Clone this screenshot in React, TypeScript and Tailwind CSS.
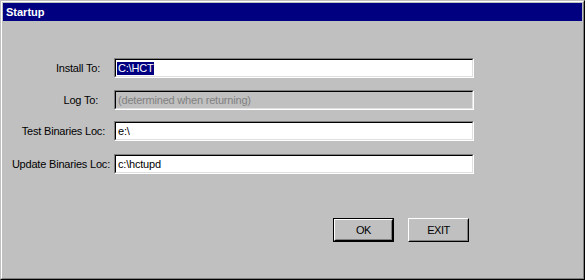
import React from "react";

function Field({
  label,
  pr,
  children,
  disabled,
  mt,
}: {
  label: string;
  pr: string;
  children: React.ReactNode;
  disabled?: boolean;
  mt: string;
}) {
  return (
    <div className={`flex items-center h-[20px] ${mt}`}>
      <div className={`w-[111px] text-right text-[11px] text-black leading-none tracking-[-0.2px] ${pr}`}>{label}</div>
      <div className="w-[360px] h-[20px] border border-t-[#808080] border-l-[#808080] border-r-white border-b-white">
        <div
          className={`h-full border border-t-black border-l-black border-r-[#dfdfdf] border-b-[#dfdfdf] flex items-center pl-[1px] text-[11px] leading-none tracking-[-0.2px] ${
            disabled ? "bg-[#c0c0c0] text-[#808080]" : "bg-white text-black"
          }`}
        >
          {children}
        </div>
      </div>
    </div>
  );
}

export default function App() {
  return (
    <div className="w-[585px] h-[280px] font-['Liberation_Sans',Arial,sans-serif] border border-t-[#c0c0c0] border-l-[#c0c0c0] border-r-black border-b-black bg-[#c0c0c0]">
      <div className="h-full border border-t-white border-l-white border-r-[#808080] border-b-[#808080] p-px flex flex-col">
        <div className="h-[18px] bg-[#000080] text-white font-bold text-[11px] pl-[3px] flex items-center leading-none">
          Startup
        </div>
        <div className="flex flex-col">
          <Field label="Install To:" pr="pr-[14px]" mt="mt-[37px]">
            <span className="bg-[#000080] text-white h-[13px] flex items-center px-px">C:\HCT</span>
          </Field>
          <Field label="Log To:" pr="pr-[16px]" mt="mt-[12px]" disabled>
            <span className="px-px">(determined when returning)</span>
          </Field>
          <Field label="Test Binaries Loc:" pr="pr-[9px]" mt="mt-[11px]">
            <span className="px-px">e:\</span>
          </Field>
          <Field label="Update Binaries Loc:" pr="pr-[4px]" mt="mt-[13px]">
            <span className="px-px">c:\hctupd</span>
          </Field>
          <div className="flex justify-end gap-[14px] pr-[113px] mt-[44px]">
            <button className="w-[61px] h-[24px] border border-black p-0 bg-[#c0c0c0]">
              <div className="h-full border border-t-white border-l-white border-r-black border-b-black">
                <div className="h-full border border-t-[#c0c0c0] border-l-[#c0c0c0] border-r-[#808080] border-b-[#808080] flex items-center justify-center text-[11px] text-black leading-none tracking-[-0.5px]">
                  OK
                </div>
              </div>
            </button>
            <button className="w-[61px] h-[24px] border border-t-white border-l-white border-r-black border-b-black p-0 bg-[#c0c0c0]">
              <div className="h-full border border-t-[#c0c0c0] border-l-[#c0c0c0] border-r-[#808080] border-b-[#808080] flex items-center justify-center text-[11px] text-black leading-none tracking-[-0.5px]">
                EXIT
              </div>
            </button>
          </div>
        </div>
      </div>
    </div>
  );
}
